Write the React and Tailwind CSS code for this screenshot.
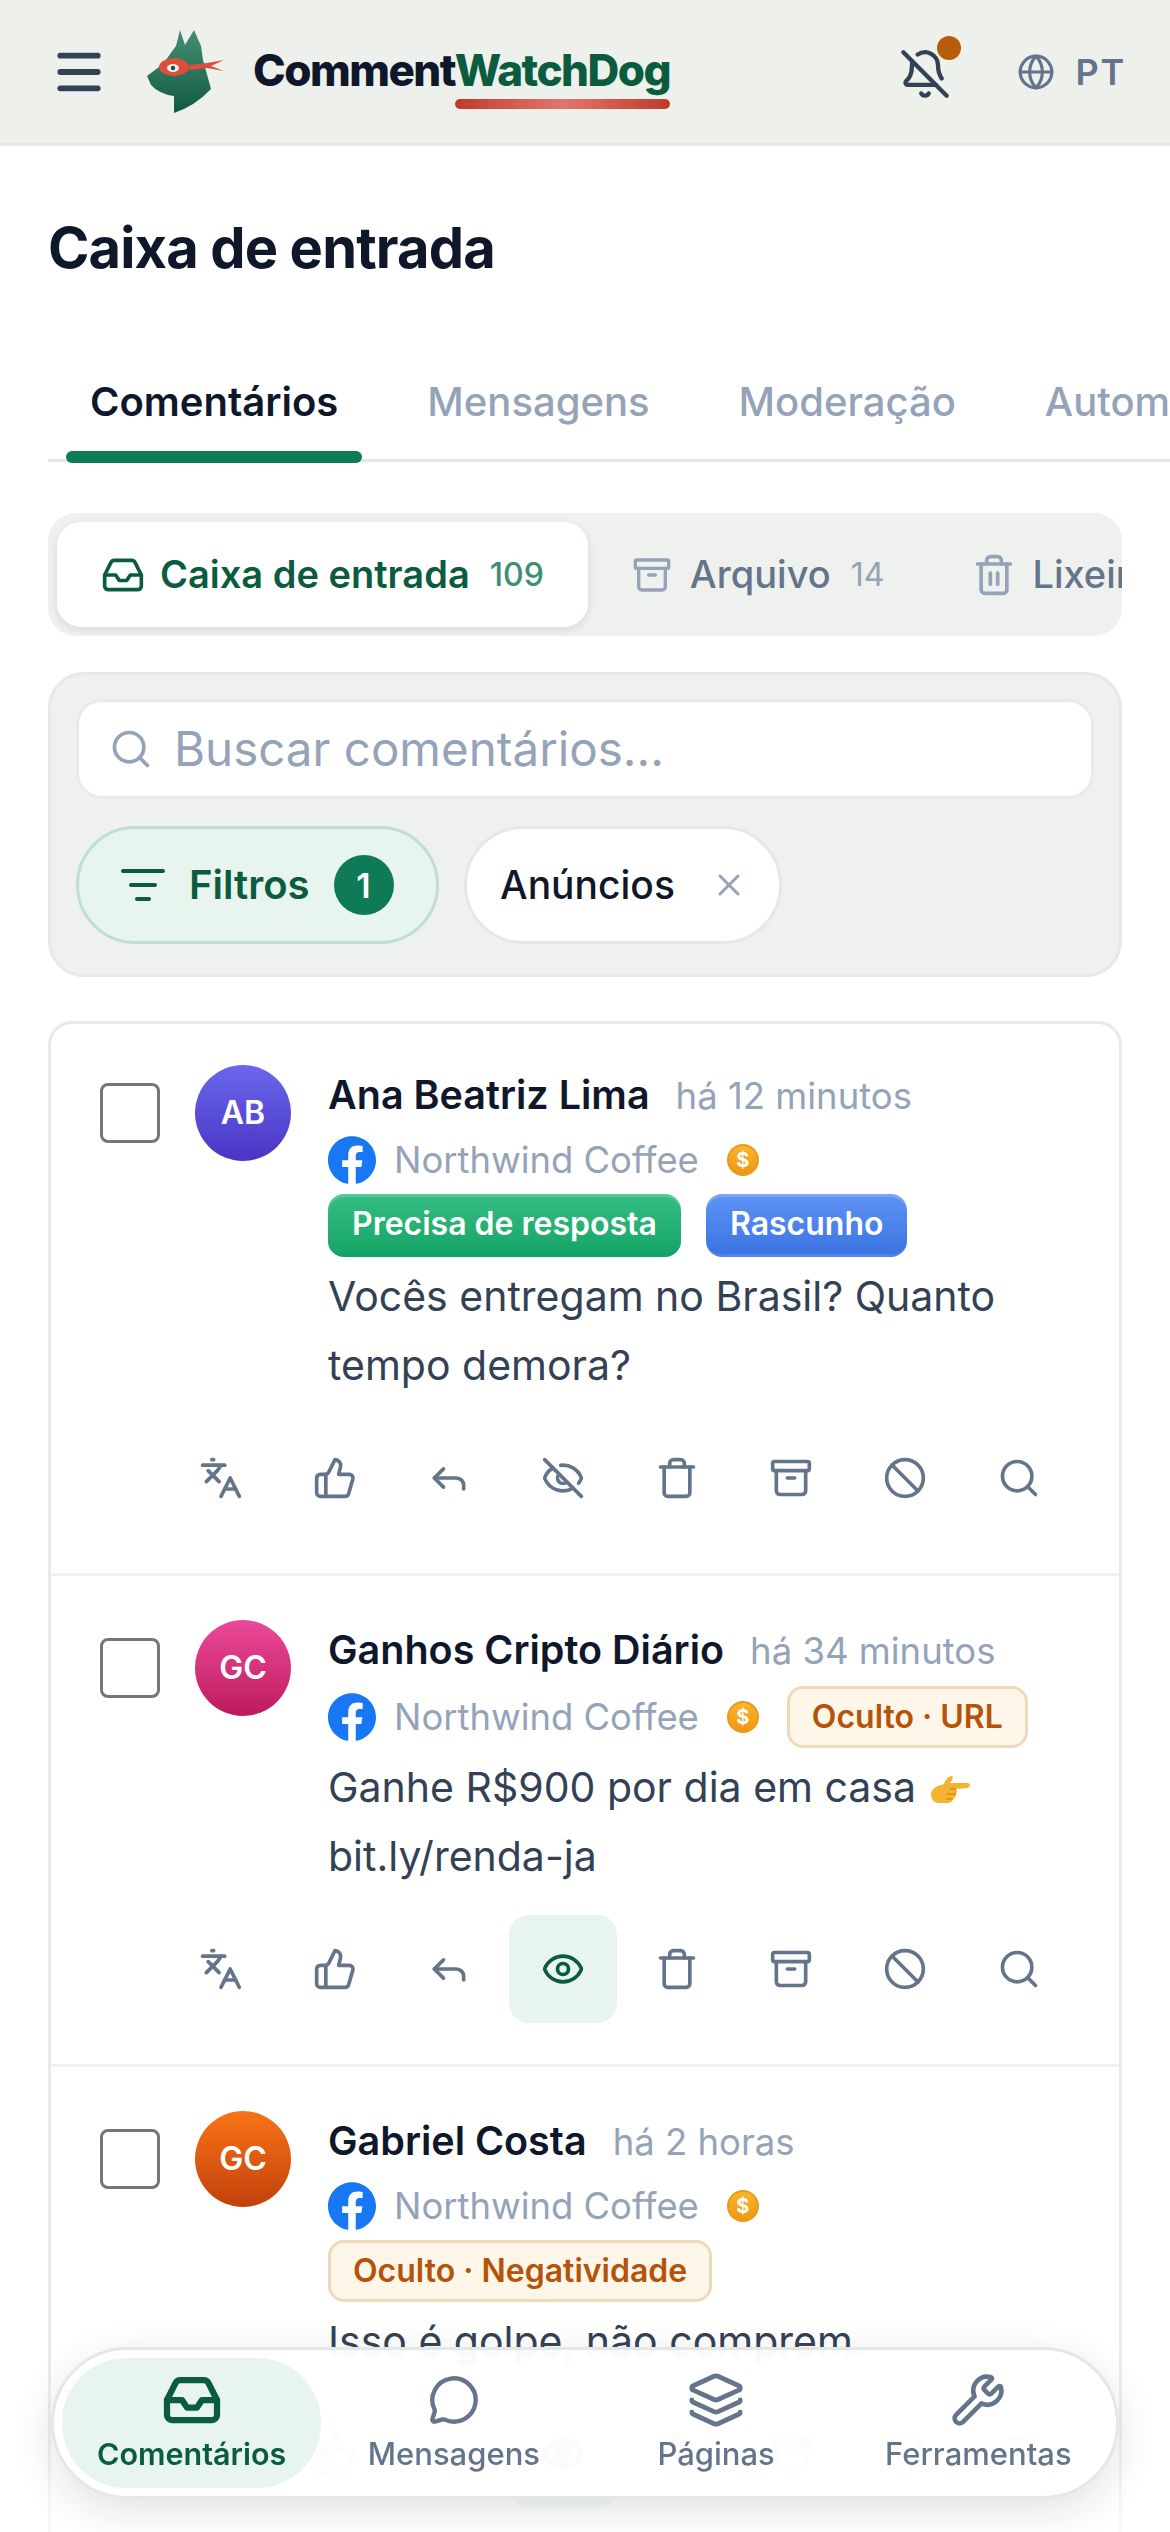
import React from "react";
import {
  Menu, BellOff, Globe, Inbox, Archive, Trash2, Trash, Search, ListFilter, X,
  Languages, ThumbsUp, Reply, EyeOff, Eye, Ban, MessageCircle, Layers, Wrench,
} from "lucide-react";

function DogLogo() {
  return (
    <svg width="80" height="84" viewBox="0 0 80 84" className="shrink-0">
      <defs>
        <linearGradient id="dogFill" x1="0" y1="0" x2="0" y2="1">
          <stop offset="0" stopColor="#3f8f74" />
          <stop offset="0.55" stopColor="#2a7258" />
          <stop offset="1" stopColor="#0f5a40" />
        </linearGradient>
      </defs>
      <path d="M33 0 L38 15 L47 0 L54 16 L56 30 L64 59 Q48 76 27 83 L27 66 Q12 64 4 55 L0 46 L16 34 L26 20 L29 16 Z" fill="url(#dogFill)" />
      <path d="M42 35 L60 33 L77 30 L64 36 L77 41 L60 38 L42 40 Z" fill="#dd4f3c" />
      <ellipse cx="27" cy="37" rx="15" ry="9" fill="#dd4f3c" />
      <ellipse cx="26" cy="38" rx="6" ry="4" fill="#e9f2ee" />
      <circle cx="26" cy="38" r="2.2" fill="#1d4f3e" />
    </svg>
  );
}

function FacebookIcon() {
  return (
    <svg width="48" height="48" viewBox="0 0 24 24" className="shrink-0">
      <circle cx="12" cy="12" r="11" fill="#ffffff" />
      <path fill="#1877f2" d="M24 12.073c0-6.627-5.373-12-12-12s-12 5.373-12 12c0 5.99 4.388 10.954 10.125 11.854v-8.385H7.078v-3.47h3.047V9.43c0-3.007 1.792-4.669 4.533-4.669 1.312 0 2.686.235 2.686.235v2.953H15.83c-1.491 0-1.956.925-1.956 1.874v2.25h3.328l-.532 3.47h-2.796v8.385C19.612 23.027 24 18.062 24 12.073z" />
    </svg>
  );
}

function PointingHand() {
  return (
    <svg width="42" height="28" viewBox="0 0 42 28" className="inline-block align-[-2px] ml-[2px]">
      <path d="M14 8 Q16 2 21 0 Q24 0 22 4 L20 7 L38 7 Q42 9 38 12 L26 13 Q28 16 26 18 Q26 22 23 23 Q22 27 17 27 L8 27 Q1 26 1 18 Q1 11 14 8 Z" fill="#f5b32f" />
      <path d="M20 13 L26 13 M17 18 L26 18 M16 23 L23 23" stroke="#d98a1c" strokeWidth="1.5" fill="none" />
    </svg>
  );
}

function Coin() {
  return (
    <span className="w-8 h-8 rounded-full shrink-0 flex items-center justify-center bg-gradient-to-b from-[#fbb42c] to-[#f0960f] border-2 border-[#ea9a1a] text-white text-[20px] font-bold leading-none">
      $
    </span>
  );
}

function HiddenBadge({ children }) {
  return (
    <span className="h-[62px] px-[22px] flex items-center rounded-[16px] bg-[#fef6e8] border-[3px] border-[#efd9bb] text-[#b45309] text-[32px] font-semibold whitespace-nowrap">
      {children}
    </span>
  );
}

const actionIcons = [Languages, ThumbsUp, Reply, EyeOff, Trash, Archive, Ban, Search];

function Actions({ active }) {
  return (
    <div className="flex gap-[6px] ml-[67px] mt-[24px]">
      {actionIcons.map((Icon, i) => {
        const isEye = i === 3 && active;
        const Shown = isEye ? Eye : Icon;
        return (
          <div
            key={i}
            className={
              isEye
                ? "w-[108px] h-[108px] flex items-center justify-center rounded-[20px] bg-[#e8f4ee] text-[#0b5c3f]"
                : "w-[108px] h-[108px] flex items-center justify-center rounded-[20px] text-[#64748b]"
            }
          >
            <Shown size={44} strokeWidth={2} />
          </div>
        );
      })}
    </div>
  );
}

function Row({ first, initials, avatar, name, time, inline, badges, lines, active, last }) {
  const top = first ? "pt-[41px]" : "pt-[44px]";
  return (
    <div className={last ? top + " pl-[49px] pr-[40px] pb-[43px]" : top + " pl-[49px] pr-[40px] pb-[41px] border-b-[3px] border-[#f0f2f1]"}>
      <div className="flex">
        <div className="w-[60px] h-[60px] mt-[18px] shrink-0 rounded-[8px] border-[3px] border-[#767676] bg-white" />
        <div className={"w-[96px] h-[96px] ml-[35px] shrink-0 rounded-full flex items-center justify-center text-white text-[32px] font-semibold bg-gradient-to-b " + avatar}>
          {initials}
        </div>
        <div className="ml-[37px] flex-1 min-w-0">
          <div className="flex items-baseline h-[60px] leading-[60px] whitespace-nowrap">
            <span className="text-[39.5px] font-semibold text-[#0f172a]">{name}</span>
            <span className="ml-[26px] text-[36.5px] text-[#94a3b8]">{time}</span>
          </div>
          <div className={inline ? "mt-[6px] h-[62px] flex items-center" : "mt-[6px] h-[58px] flex items-center"}>
            <FacebookIcon />
            <span className="ml-[18px] text-[36.4px] text-[#94a3b8] whitespace-nowrap">Northwind Coffee</span>
            <span className="ml-[28px]"><Coin /></span>
            {inline && <span className="ml-[28px]"><HiddenBadge>{inline}</HiddenBadge></span>}
          </div>
          {badges && <div className="mt-[5px] flex gap-[25px]">{badges}</div>}
          <div className="mt-[5px] text-[41px] leading-[69px] text-[#334155]">{lines}</div>
        </div>
      </div>
      <Actions active={active} />
    </div>
  );
}

function NavItem({ Icon, label, active, size = 60 }) {
  return (
    <div className={active ? "flex flex-col items-center justify-center rounded-[64px] bg-[#e8f4ee] text-[#0b5c3f]" : "flex flex-col items-center justify-center text-[#64748b]"}>
      <div className="h-[60px] flex items-center justify-center">
        <Icon size={size} strokeWidth={active ? 2.5 : 2} />
      </div>
      <span className={active ? "text-[30.5px] leading-[44px] font-semibold mt-[2px]" : "text-[31px] leading-[44px] font-medium mt-[2px]"}>{label}</span>
    </div>
  );
}

export default function App() {
  return (
    <div className="relative w-[1170px] h-[2532px] overflow-hidden bg-white [font-family:Inter,sans-serif]">
      <header className="h-[146px] bg-[#edf0eb] border-b-[3px] border-[#e6e8e5] flex items-center pl-[51px] pr-[44px]">
        <Menu size={56} strokeWidth={2.5} className="text-[#334155] shrink-0" />
        <div className="ml-[40px]"><DogLogo /></div>
        <div className="ml-[26px] relative text-[44px] font-extrabold tracking-[-0.035em] leading-none whitespace-nowrap -mt-[4px]">
          <span className="text-[#0f172a]">Comment</span>
          <span className="relative text-[#0b5c3f]">
            WatchDog
            <span className="absolute left-0 right-0 top-[56px] h-[10px] rounded-[5px] bg-gradient-to-r from-[#c0392b] via-[#e2756a] to-[#c0392b]" />
          </span>
        </div>
        <div className="ml-auto relative shrink-0 mt-[4px]">
          <BellOff size={52} strokeWidth={2} className="text-[#334155]" />
          <span className="absolute -top-[12px] -right-[10px] w-6 h-6 rounded-full bg-[#b85c0a]" />
        </div>
        <Globe size={38} strokeWidth={2} className="ml-[66px] text-[#64748b] shrink-0" />
        <span className="ml-[20px] text-[36px] font-semibold tracking-[0.05em] text-[#64748b]">PT</span>
      </header>

      <h1 className="mt-[68px] ml-[48px] text-[56px] leading-[68px] font-bold tracking-[-0.015em] text-[#0f172a]">Caixa de entrada</h1>

      <div className="mt-[92px] ml-[48px] relative border-b-[3px] border-[#e5e7e8] h-[88px]">
        <div className="flex gap-[41px] pl-[18px] whitespace-nowrap text-[40px] leading-[52px]">
          <div className="relative px-[24px] h-[85px] font-semibold text-[#0f172a] pt-[2px]">
            Comentários
            <span className="absolute left-0 right-0 bottom-[-4px] h-[12px] rounded-[6px] bg-[#0f7a56]" />
          </div>
          <div className="px-[24px] pt-[2px] font-medium text-[#94a3b8]">Mensagens</div>
          <div className="px-[24px] pt-[2px] font-medium text-[#94a3b8]">Moderação</div>
          <div className="px-[24px] pt-[2px] font-medium text-[#94a3b8]">Automação</div>
        </div>
      </div>

      <div className="mt-[51px] mx-[48px] h-[123px] p-[9px] rounded-[28px] bg-[#eef1ed] overflow-hidden flex whitespace-nowrap">
        <div className="h-[105px] px-[44px] shrink-0 rounded-[24px] bg-white shadow-[0_3px_8px_rgba(15,23,42,0.1)] flex items-center text-[#0b5c3f]">
          <Inbox size={44} strokeWidth={2} />
          <span className="ml-[15px] text-[38px] font-semibold">Caixa de entrada</span>
          <span className="ml-[20px] text-[32px] font-medium text-[#3f8f74]">109</span>
        </div>
        <div className="h-[105px] px-[44px] shrink-0 flex items-center text-[#64748b]">
          <Archive size={40} strokeWidth={2} className="text-[#94a3b8]" />
          <span className="ml-[18px] text-[38px] font-medium">Arquivo</span>
          <span className="ml-[20px] text-[32px] text-[#94a3b8]">14</span>
        </div>
        <div className="h-[105px] px-[44px] shrink-0 flex items-center text-[#64748b]">
          <Trash2 size={44} strokeWidth={2} className="text-[#94a3b8]" />
          <span className="ml-[16px] text-[38px] font-medium">Lixeira</span>
        </div>
      </div>

      <div className="mt-[36px] mx-[48px] h-[305px] rounded-[36px] bg-[#eef1ed] border-[3px] border-[#e6e9e5] pt-[24px] px-[25px]">
        <div className="h-[100px] rounded-[26px] bg-white border-[3px] border-[#e8ebe7] flex items-center pl-[30px]">
          <Search size={44} strokeWidth={2} className="text-[#94a3b8]" />
          <span className="ml-[21px] text-[47.5px] text-[#94a3b8]">Buscar comentários...</span>
        </div>
        <div className="mt-[27px] flex gap-[25px]">
          <div className="h-[118px] w-[363px] rounded-full bg-[#e8f4ee] border-[3px] border-[#bfe0d0] flex items-center pl-[40px] text-[#0b5c3f]">
            <ListFilter size={48} strokeWidth={2} />
            <span className="ml-[22px] text-[40px] font-semibold">Filtros</span>
            <span className="ml-[24px] w-[60px] h-[60px] rounded-full bg-[#0f7a56] text-white text-[34px] font-semibold flex items-center justify-center">1</span>
          </div>
          <div className="h-[118px] w-[318px] rounded-full bg-white border-[3px] border-[#e6e8e5] flex items-center pl-[33px]">
            <span className="text-[39px] font-medium text-[#0f172a]">Anúncios</span>
            <X size={36} strokeWidth={2} className="ml-[36px] text-[#94a3b8]" />
          </div>
        </div>
      </div>

      <div className="mt-[44px] mx-[48px] rounded-t-[24px] border-x-[3px] border-t-[3px] border-[#e8eaea]">
        <Row
          first
          initials="AB"
          avatar="from-[#6a67ec] to-[#4a34c4]"
          name="Ana Beatriz Lima"
          time="há 12 minutos"
          badges={
            <>
              <span className="h-[63px] px-[24px] flex items-center rounded-[16px] border-b-[3px] border-[#15a066] shadow-[inset_0_3px_0_rgba(255,255,255,0.18)] text-white text-[32px] font-semibold whitespace-nowrap bg-gradient-to-b from-[#35bd85] to-[#14a566]">Precisa de resposta</span>
              <span className="h-[63px] px-[24px] flex items-center rounded-[16px] border-b-[3px] border-[#4a86ee] shadow-[inset_0_3px_0_rgba(255,255,255,0.18)] text-white text-[32px] font-semibold whitespace-nowrap bg-gradient-to-b from-[#5f93f5] to-[#3b74e2]">Rascunho</span>
            </>
          }
          lines={<>Vocês entregam no Brasil? Quanto<br />tempo demora?</>}
        />
        <Row
          initials="GC"
          avatar="from-[#ec4899] to-[#be185d]"
          name="Ganhos Cripto Diário"
          time="há 34 minutos"
          inline="Oculto · URL"
          lines={<>Ganhe R$900 por dia em casa <PointingHand /><br />bit.ly/renda-ja</>}
          active
        />
        <Row
          initials="GC"
          avatar="from-[#f97316] to-[#c2410c]"
          name="Gabriel Costa"
          time="há 2 horas"
          badges={<HiddenBadge>Oculto · Negatividade</HiddenBadge>}
          lines="Isso é golpe, não comprem."
          active
          last
        />
      </div>

      <div className="absolute left-0 right-0 top-[2340px] bottom-0 bg-gradient-to-b from-transparent to-white/70 pointer-events-none" />

      <nav className="absolute left-[51px] top-[2347px] w-[1068px] h-[152px] rounded-full bg-white/[0.94] backdrop-blur-[2px] border-[3px] border-[#e5e7e5] shadow-[0_12px_40px_rgba(15,23,42,0.12)] p-[8px] grid grid-cols-4 gap-[3px]">
        <NavItem Icon={Inbox} label="Comentários" active />
        <NavItem Icon={MessageCircle} label="Mensagens" size={52} />
        <NavItem Icon={Layers} label="Páginas" size={58} />
        <NavItem Icon={Wrench} label="Ferramentas" size={56} />
      </nav>
    </div>
  );
}
